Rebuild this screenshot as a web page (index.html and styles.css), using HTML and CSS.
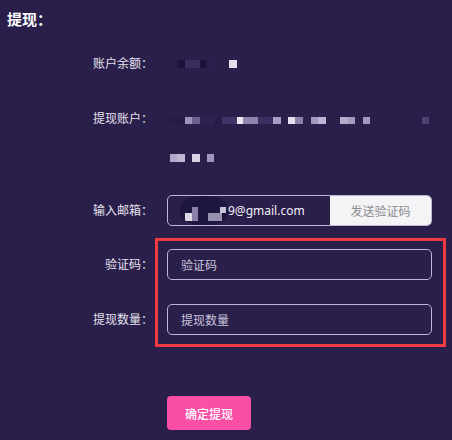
FILE: index.html
```html
<!DOCTYPE html>
<html lang="zh-CN">
<head>
<meta charset="utf-8">
<title>提现</title>
<link rel="stylesheet" href="styles.css">
</head>
<body>
<div class="page">
  <h1 class="title">提现：</h1>
  <div class="form">
    <div class="row row-balance">
      <span class="label">账户余额：</span>
      <div class="value"><div class="mosaic mosaic-balance"></div></div>
    </div>
    <div class="row row-account">
      <span class="label">提现账户：</span>
      <div class="value">
        <div class="mosaic mosaic-acc1"></div>
        <div class="mosaic mosaic-acc2"></div>
      </div>
    </div>
    <div class="row row-email">
      <span class="label">输入邮箱：</span>
      <div class="email-box">
        <div class="email-field">
          <span class="email-blur"></span>
          <span class="email-text">9@gmail.com</span>
        </div>
        <button class="send-btn" type="button">发送验证码</button>
      </div>
    </div>
    <div class="highlight-group">
      <div class="row row-code">
        <span class="label">验证码：</span>
        <div class="input"><span class="placeholder">验证码</span></div>
      </div>
      <div class="row row-amount">
        <span class="label">提现数量：</span>
        <div class="input"><span class="placeholder">提现数量</span></div>
      </div>
      <div class="annotation"></div>
    </div>
    <div class="row row-submit">
      <span class="label"></span>
      <button class="submit-btn" type="button">确定提现</button>
    </div>
  </div>
</div>
</body>
</html>
```
FILE: styles.css
```css
* { box-sizing: border-box; }
html, body { margin: 0; padding: 0; }
body {
  background: #2a1e4a;
  width: 452px;
  height: 440px;
  overflow: hidden;
  font-family: "Noto Sans", "Noto Sans CJK SC", sans-serif;
  color: #e6e3ef;
}
.page { padding-top: 9px; }
.title {
  margin: 0;
  padding-left: 7px;
  font-size: 15px;
  line-height: 20px;
  font-weight: 700;
  color: #ffffff;
}
.form { display: flex; flex-direction: column; }
.row { display: flex; align-items: center; column-gap: 14px; }
.label {
  width: 153px;
  flex: none;
  text-align: right;
  font-size: 12px;
  line-height: 20px;
  color: #e6e3ef;
}
.row-balance { margin-top: 25px; height: 20px; }
.row-account { margin-top: 35px; align-items: flex-start; }
.row-email { margin-top: 33px; }
.highlight-group { position: relative; margin-top: 23px; }
.row-amount { margin-top: 24px; }
.row-submit { margin-top: 61px; }

.value { width: 265px; }
.mosaic { height: 8px; }
.mosaic-balance {
  background: linear-gradient(to right,
    transparent 10px, #1c143a 10px 18px, #3a3060 18px 33px, #1a1238 33px 40px,
    #282050 40px 46px, transparent 46px 62px, #e4e0ee 62px 70px, transparent 70px);
}
.mosaic-acc1 {
  margin-top: 8px;
  height: 7px;
  background: linear-gradient(to right,
    transparent 3px, #241b46 3px 18px, #9c93b8 18px 25px, #6c6290 25px 33px,
    #2e2454 33px 48px, #251b47 48px 55px, #3e3466 55px 70px, #ece8f4 70px 76px,
    #8e86ae 76px 91px, #3a3062 91px 106px, #a69ec4 106px 114px, transparent 114px 121px,
    #e4e0ee 121px 128px, #8a82aa 128px 136px, transparent 136px 144px,
    #a098be 144px 151px, #bcb4d4 151px 159px, transparent 159px 173px,
    #b4acc8 173px 181px, #a49cc0 181px 188px, transparent 188px 196px,
    #a49cc0 196px 203px, transparent 203px 255px, #4c4272 255px 262px, transparent 262px);
}
.mosaic-acc2 {
  margin-top: 30px;
  background: linear-gradient(to right,
    transparent 3px, #b0a8c8 3px 10px, #c0b8d4 10px 18px, transparent 18px 25px,
    #d8d4e6 25px 33px, transparent 33px 40px, #a098c0 40px 47px, transparent 47px);
}

.email-box {
  width: 265px;
  height: 31px;
  display: flex;
  border: 1px solid #bdb6d4;
  border-radius: 5px;
  overflow: hidden;
}
.email-field {
  flex: 1;
  display: flex;
  align-items: center;
  padding-left: 12px;
}
.email-blur {
  width: 48px;
  height: 29px;
  border-radius: 45%;
  background:
    linear-gradient(#dcd8e8, #dcd8e8) 5px 17px / 7px 8px no-repeat,
    linear-gradient(#8a80a8, #8a80a8) 12px 11px / 6px 14px no-repeat,
    linear-gradient(#9890b0, #9890b0) 28px 17px / 14px 8px no-repeat,
    linear-gradient(#c8c2da, #c8c2da) 40px 11px / 6px 6px no-repeat,
    #1f1640;
}
.email-text {
  font-family: "Noto Sans", sans-serif;
  font-size: 12px;
  color: #f2f0f7;
}
.send-btn {
  width: 101px;
  flex: none;
  border: 0;
  margin: 0;
  padding: 0;
  background: #f4f4f6;
  color: #8a8a8e;
  font-family: "Noto Sans CJK SC", sans-serif;
  font-size: 12px;
}
.input {
  width: 265px;
  height: 31px;
  border: 1px solid #bdb6d4;
  border-radius: 5px;
  display: flex;
  align-items: center;
  padding-left: 13px;
}
.placeholder {
  font-size: 12px;
  color: #c9c4da;
}
.annotation {
  position: absolute;
  left: 155px;
  top: -11px;
  width: 291px;
  height: 109px;
  border: 3px solid #ef3b40;
  pointer-events: none;
}
.submit-btn {
  width: 84px;
  height: 34px;
  border: 0;
  border-radius: 4px;
  background: #fb4fa6;
  color: #ffffff;
  font-family: "Noto Sans CJK SC", sans-serif;
  font-size: 12px;
  font-weight: 500;
}
```
